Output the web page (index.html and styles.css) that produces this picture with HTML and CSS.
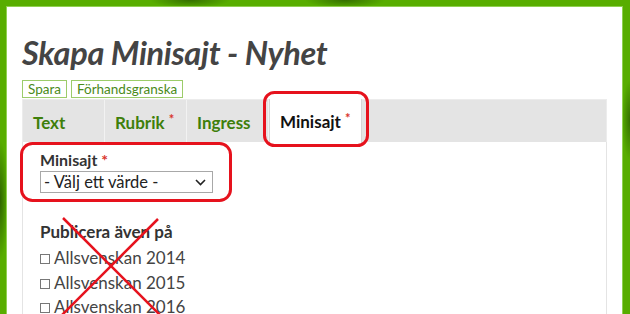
FILE: index.html
```html
<!DOCTYPE html>
<html lang="sv">
<head>
    <meta charset="UTF-8">
    <title>Skapa Minisajt - Nyhet</title>
    <link rel="stylesheet" href="styles.css">
</head>
<body>

<div class="page">
    <h1>Skapa Minisajt - Nyhet</h1>

    <!-- Knappar -->
    <div class="actions">
        <button class="btn">Spara</button>
        <button class="btn">Förhandsgranska</button>
    </div>

    <!-- Flikar -->
    <div class="tabs">
        <div class="tab">Text</div>
        <div class="tab">Rubrik <span class="req">*</span></div>
        <div class="tab">Ingress</div>
        <div class="tab active">Minisajt <span class="req">*</span></div>
    </div>

    <div class="tab-content">
        <div class="field">
            <label class="label">Minisajt <span class="req">*</span></label>
            <select class="select">
                <option>- Välj ett värde -</option>
            </select>
        </div>

        <div class="field publish">
            <div class="label">Publicera även på</div>
            <div class="check"><span class="box"></span>Allsvenskan 2014</div>
            <div class="check"><span class="box"></span>Allsvenskan 2015</div>
            <div class="check"><span class="box"></span>Allsvenskan 2016</div>
        </div>
    </div>
</div>

<!-- Markeringar ovanpå skärmbilden -->
<svg class="marks" width="630" height="314" viewBox="0 0 630 314">
    <rect x="264.5" y="92.5" width="103" height="53" rx="10" />
    <rect x="21.5" y="143.5" width="209" height="57" rx="11" />
    <line x1="63" y1="218" x2="160" y2="315" />
    <line x1="158" y1="219" x2="62" y2="315" />
</svg>

</body>
</html>
```

FILE: styles.css
```css
body {
    margin: 0;
    padding: 6px 7px 0 6px;
    height: 314px;
    box-sizing: border-box;
    overflow: hidden;
    font-family: Lato, sans-serif;
    background-color: #58ad00;
    background-image:
        radial-gradient(ellipse 40px 8px at 190px 0, rgba(30, 70, 0, 0.6), transparent),
        radial-gradient(ellipse 40px 8px at 345px 0, rgba(30, 70, 0, 0.6), transparent),
        radial-gradient(ellipse 8px 60px at 0 200px, rgba(30, 70, 0, 0.7), transparent),
        radial-gradient(ellipse 8px 40px at 630px 120px, rgba(30, 70, 0, 0.6), transparent);
}
.page {
    height: 100%;
    background-color: white;
    border: 1px solid #90d050;
    border-bottom: none;
    padding: 25px 15px 0 15px;
    box-sizing: border-box;
}
h1 {
    margin: 0;
    font-size: 32.5px;
    font-style: italic;
    font-weight: 700;
    color: #444;
    line-height: 42px;
    letter-spacing: -0.3px;
}
.actions {
    display: flex;
    gap: 4px;
    margin-top: 6px;
}
.btn {
    font-family: Lato, sans-serif;
    font-size: 13.5px;
    color: #4a8a1a;
    background: white;
    border: 1px solid #9ccc6a;
    padding: 0 5px;
    height: 18px;
    line-height: 16px;
}
.tabs {
    display: flex;
    background-color: #e4e4e4;
    height: 42px;
    margin-top: 1px;
    border: 1px solid #ececec;
    border-bottom: none;
}
.tab {
    width: 82px;
    box-sizing: border-box;
    padding-left: 10px;
    border-right: 1px solid #f2f2f2;
    font-size: 17px;
    font-weight: 700;
    color: #3e7f0b;
    line-height: 46px;
}
.tab.active {
    width: 93px;
    margin-top: -1px;
    height: 44px;
    background-color: white;
    color: #111;
    border-left: 1px solid #d6d6d6;
    border-right: 1px solid #d6d6d6;
    padding-left: 10px;
}
.req {
    color: #d9342b;
    font-size: 13px;
    vertical-align: top;
    line-height: 38px;
}
.tab-content {
    border-left: 1px solid #e4e4e4;
    border-right: 1px solid #e4e4e4;
    height: 200px;
    padding: 7px 17px;
}
.label {
    display: block;
    font-size: 16px;
    font-weight: 700;
    color: #333;
    line-height: 21px;
}
.label .req {
    font-size: 16px;
    line-height: 21px;
}
.select {
    display: block;
    appearance: none;
    width: 173px;
    height: 22px;
    margin-top: 1px;
    font-family: Lato, sans-serif;
    font-size: 16.5px;
    color: #222;
    border: 1px solid #a8a8a8;
    border-radius: 0;
    padding: 0 0 0 3px;
    background: white url("data:image/svg+xml,%3Csvg xmlns='http://www.w3.org/2000/svg' width='11' height='7'%3E%3Cpath d='M1 1l4.5 4.5 4.5-4.5' fill='none' stroke='%23222' stroke-width='1.6'/%3E%3C/svg%3E") no-repeat right 6px center;
}
.publish {
    margin-top: 28px;
}
.publish .label {
    font-size: 17px;
    margin-bottom: 4px;
}
.check {
    font-size: 17px;
    color: #444;
    line-height: 24.5px;
}
.box {
    display: inline-block;
    width: 8px;
    height: 8px;
    border: 1px solid #777;
    margin-right: 4px;
}
.marks {
    position: absolute;
    left: 0;
    top: 0;
    pointer-events: none;
}
.marks rect {
    fill: none;
    stroke: #e6121d;
    stroke-width: 3;
}
.marks line {
    stroke: #e6121d;
    stroke-width: 2.5;
}
```
